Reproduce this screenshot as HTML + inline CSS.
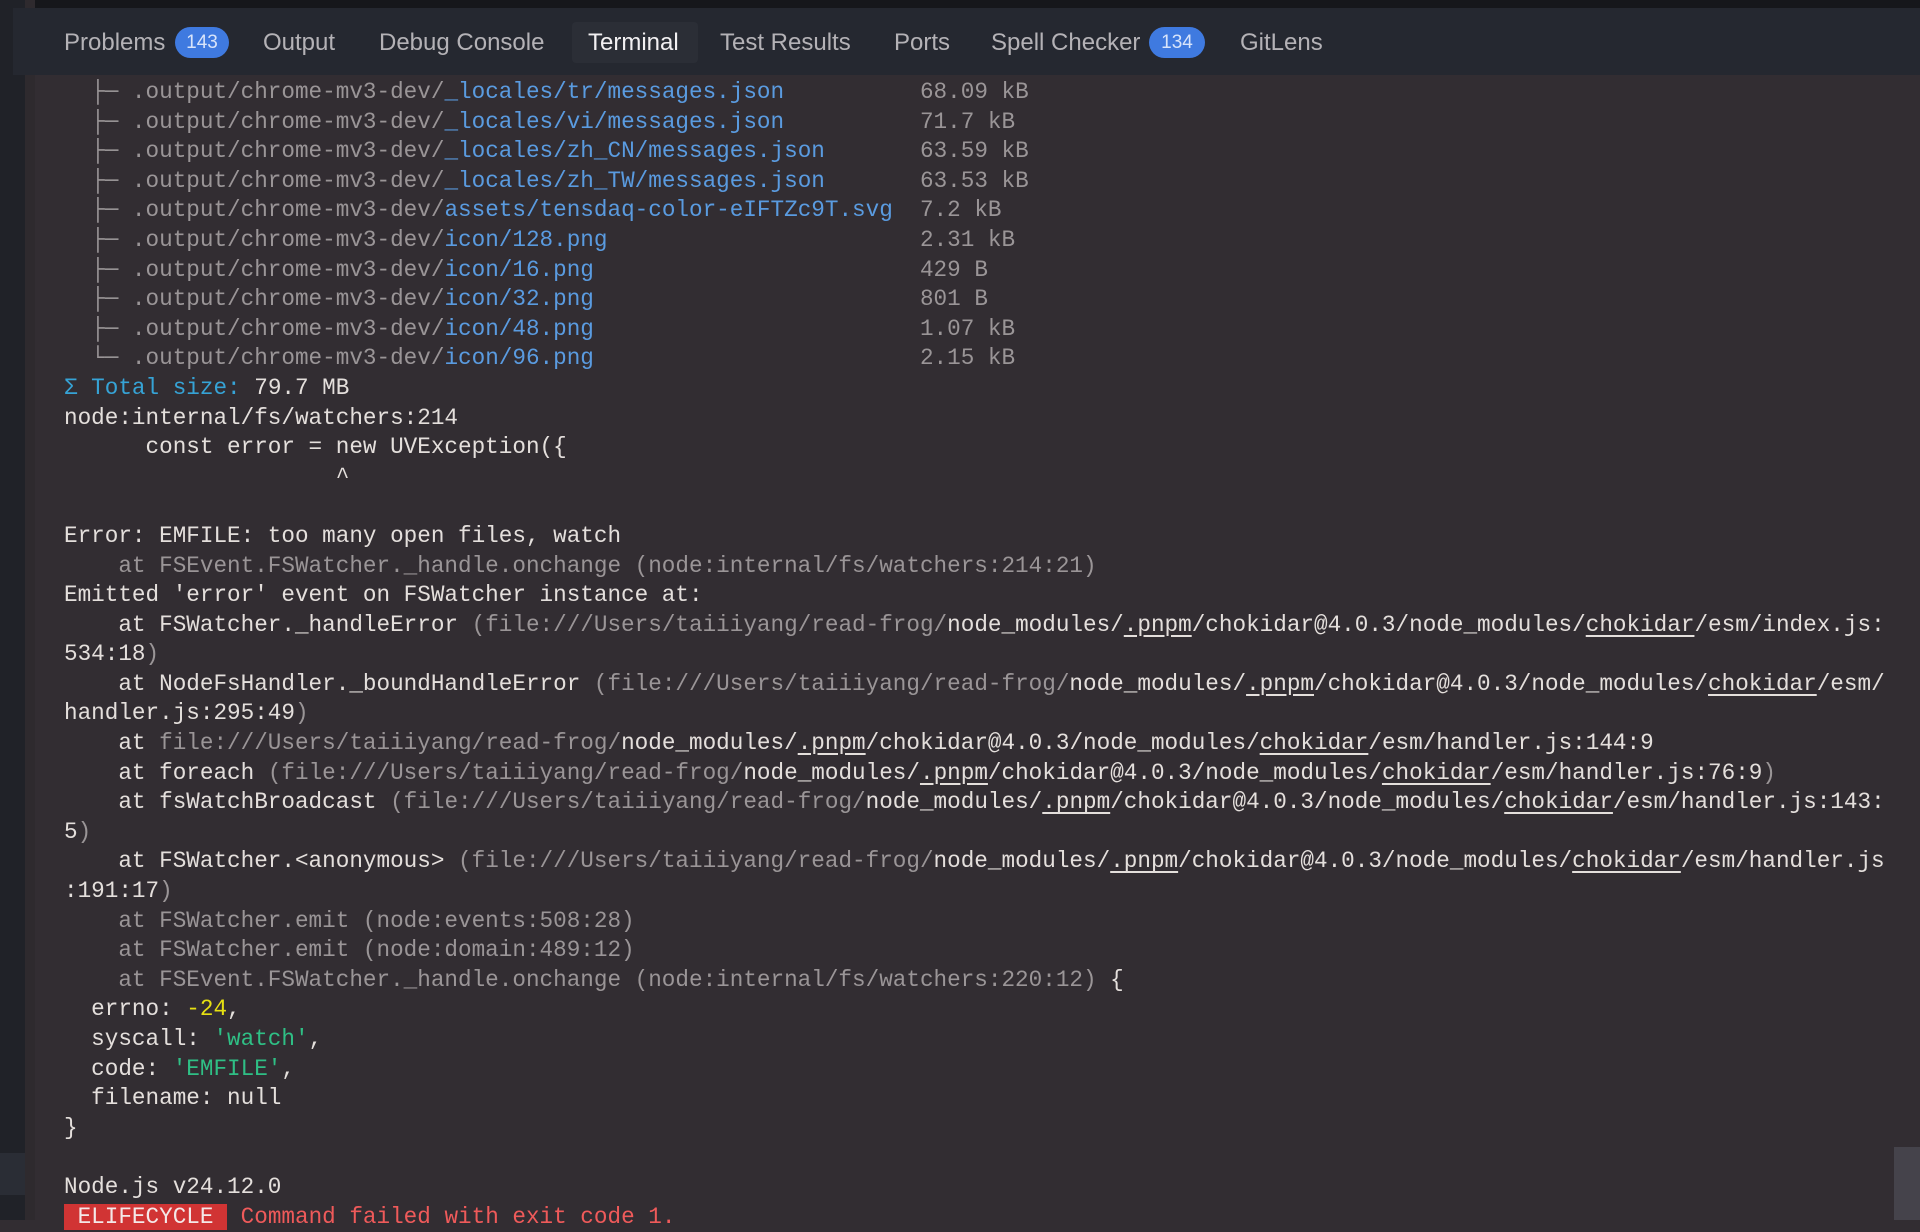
<!DOCTYPE html>
<html><head><meta charset="utf-8"><style>
html,body{margin:0;padding:0;width:1920px;height:1220px;overflow:hidden;background:#322d32;}
.strip{position:absolute;left:0;top:0;width:25px;height:1220px;background:#202228;}
.strip2{position:absolute;left:0;top:1153px;width:25px;height:42px;background:#2a2d35;}
.edge{position:absolute;left:25px;top:0;width:10px;height:1220px;background:#2e2a2e;}
.topbar{position:absolute;left:0;top:0;width:1920px;height:8px;background:#16171b;}
.tabs{position:absolute;left:13px;top:8px;width:1907px;height:67px;background:#252830;font-family:"Liberation Sans",sans-serif;font-size:24px;color:#b4b2b6;}
.tab{position:absolute;top:14px;line-height:42px;white-space:nowrap;}
.badge{position:absolute;top:19px;height:31px;border-radius:16px;background:#3f7ae0;color:#d8e4fa;font-size:19px;line-height:31px;text-align:center;}
.active{position:absolute;left:559px;top:14px;width:126px;height:41px;background:#2b2e36;border-radius:4px;}
pre{position:absolute;left:64px;top:78px;margin:0;font-family:"Liberation Mono",monospace;font-size:22.65px;line-height:29.6px;color:#e4dfdc;white-space:pre;}
.g{color:#9a9597}.b{color:#5a9be0}.c{color:#36a3d6}.y{color:#e6e012}.gr{color:#2fbf85}.u{text-decoration:underline;text-underline-offset:4px}
.rb{background:#d13434;color:#f4e8e8}.r{color:#ef5a5a}
.scroll{position:absolute;left:1894px;top:1147px;width:26px;height:73px;background:#45434b;}
</style></head><body>
<div class="topbar"></div>
<div class="strip"></div><div class="strip2"></div><div class="edge"></div>
<div class="tabs">
<div class="active"></div>
<div class="tab" style="left:51px">Problems</div>
<div class="badge" style="left:162px;width:54px">143</div>
<div class="tab" style="left:250px">Output</div>
<div class="tab" style="left:366px">Debug Console</div>
<div class="tab" style="left:575px;color:#f2f0f2">Terminal</div>
<div class="tab" style="left:707px">Test Results</div>
<div class="tab" style="left:881px">Ports</div>
<div class="tab" style="left:978px">Spell Checker</div>
<div class="badge" style="left:1136px;width:56px">134</div>
<div class="tab" style="left:1227px">GitLens</div>
</div>
<pre><span class="g">  ├─ .output/chrome-mv3-dev/</span><span class="b">_locales/tr/messages.json</span><span class="g">          68.09 kB</span>
<span class="g">  ├─ .output/chrome-mv3-dev/</span><span class="b">_locales/vi/messages.json</span><span class="g">          71.7 kB</span>
<span class="g">  ├─ .output/chrome-mv3-dev/</span><span class="b">_locales/zh_CN/messages.json</span><span class="g">       63.59 kB</span>
<span class="g">  ├─ .output/chrome-mv3-dev/</span><span class="b">_locales/zh_TW/messages.json</span><span class="g">       63.53 kB</span>
<span class="g">  ├─ .output/chrome-mv3-dev/</span><span class="b">assets/tensdaq-color-eIFTZc9T.svg</span><span class="g">  7.2 kB</span>
<span class="g">  ├─ .output/chrome-mv3-dev/</span><span class="b">icon/128.png</span><span class="g">                       2.31 kB</span>
<span class="g">  ├─ .output/chrome-mv3-dev/</span><span class="b">icon/16.png</span><span class="g">                        429 B</span>
<span class="g">  ├─ .output/chrome-mv3-dev/</span><span class="b">icon/32.png</span><span class="g">                        801 B</span>
<span class="g">  ├─ .output/chrome-mv3-dev/</span><span class="b">icon/48.png</span><span class="g">                        1.07 kB</span>
<span class="g">  └─ .output/chrome-mv3-dev/</span><span class="b">icon/96.png</span><span class="g">                        2.15 kB</span>
<span class="c">Σ Total size:</span> 79.7 MB
node:internal/fs/watchers:214
      const error = new UVException({
                    ^

Error: EMFILE: too many open files, watch
<span class="g">    at FSEvent.FSWatcher._handle.onchange (node:internal/fs/watchers:214:21)</span>
Emitted 'error' event on FSWatcher instance at:
    at FSWatcher._handleError <span class="g">(file:///Users/taiiiyang/read-frog/</span>node_modules/<span class="u">.pnpm</span>/chokidar@4.0.3/node_modules/<span class="u">chokidar</span>/esm/index.js:
534:18<span class="g">)</span>
    at NodeFsHandler._boundHandleError <span class="g">(file:///Users/taiiiyang/read-frog/</span>node_modules/<span class="u">.pnpm</span>/chokidar@4.0.3/node_modules/<span class="u">chokidar</span>/esm/
handler.js:295:49<span class="g">)</span>
    at <span class="g">file:///Users/taiiiyang/read-frog/</span>node_modules/<span class="u">.pnpm</span>/chokidar@4.0.3/node_modules/<span class="u">chokidar</span>/esm/handler.js:144:9
    at foreach <span class="g">(file:///Users/taiiiyang/read-frog/</span>node_modules/<span class="u">.pnpm</span>/chokidar@4.0.3/node_modules/<span class="u">chokidar</span>/esm/handler.js:76:9<span class="g">)</span>
    at fsWatchBroadcast <span class="g">(file:///Users/taiiiyang/read-frog/</span>node_modules/<span class="u">.pnpm</span>/chokidar@4.0.3/node_modules/<span class="u">chokidar</span>/esm/handler.js:143:
5<span class="g">)</span>
    at FSWatcher.&lt;anonymous&gt; <span class="g">(file:///Users/taiiiyang/read-frog/</span>node_modules/<span class="u">.pnpm</span>/chokidar@4.0.3/node_modules/<span class="u">chokidar</span>/esm/handler.js
:191:17<span class="g">)</span>
<span class="g">    at FSWatcher.emit (node:events:508:28)</span>
<span class="g">    at FSWatcher.emit (node:domain:489:12)</span>
<span class="g">    at FSEvent.FSWatcher._handle.onchange (node:internal/fs/watchers:220:12)</span> {
  errno: <span class="y">-24</span>,
  syscall: <span class="gr">'watch'</span>,
  code: <span class="gr">'EMFILE'</span>,
  filename: null
}

Node.js v24.12.0
<span class="rb"> ELIFECYCLE </span> <span class="r">Command failed with exit code 1.</span></pre>
<div class="scroll"></div>
</body></html>
